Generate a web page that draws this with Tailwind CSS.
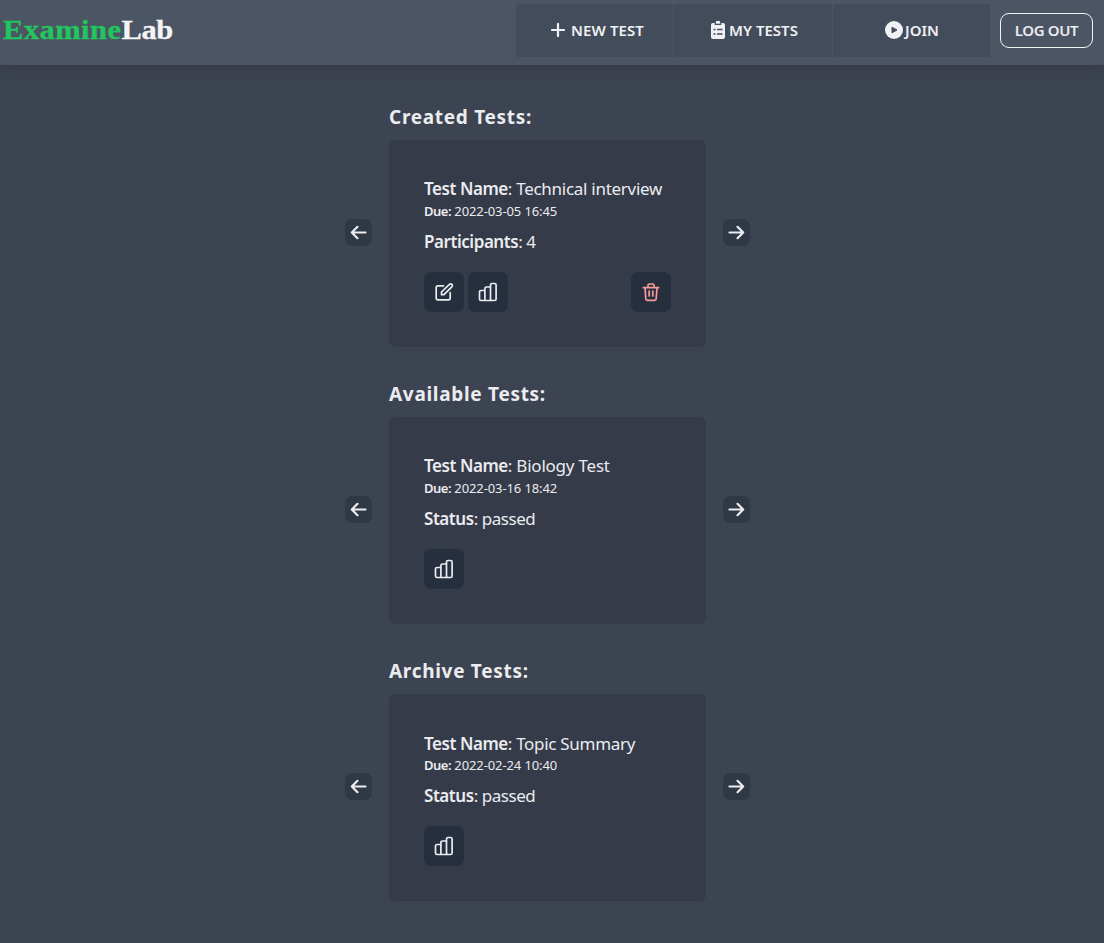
<!DOCTYPE html>
<html lang="en">
<head>
<meta charset="utf-8">
<title>ExamineLab</title>
<script src="https://cdn.jsdelivr.net/npm/@tailwindcss/browser@4"></script>
</head>
<body class="bg-[#3d4451] h-[943px] overflow-hidden font-['Noto_Sans','Open_Sans',sans-serif] text-[#ebecf0]">
<svg class="hidden">
  <symbol id="left" viewBox="0 0 20 20"><path d="M16.500 9.500H3.500M8.500 3.800L2.800 9.500l5.700 5.700" fill="none" stroke="currentColor" stroke-width="2.200" stroke-linecap="round" stroke-linejoin="round"/></symbol>
  <symbol id="right" viewBox="0 0 20 20"><path d="M2.500 9.500h13M10.500 3.800l5.700 5.700-5.700 5.700" fill="none" stroke="currentColor" stroke-width="2.200" stroke-linecap="round" stroke-linejoin="round"/></symbol>
  <symbol id="chart" viewBox="0 0 20 20"><path d="M1.500 10q0-1.500 1.500-1.500h3.900v10H3q-1.500 0-1.500-1.500zM6.900 18.500V6.500Q6.900 5 8.400 5h4.100v13.500zM12.500 17V3q0-1.500 1.500-1.500h2.600q1.500 0 1.500 1.500v14q0 1.500-1.500 1.500H14q-1.500 0-1.500-1.500z" fill="none" stroke="currentColor" stroke-width="1.700" stroke-linejoin="round"/></symbol>
  <symbol id="edit" viewBox="0 0 20 20"><path d="M9.500 3.800H4Q2.200 3.800 2.200 5.600V16q0 1.800 1.800 1.800h10.400q1.800 0 1.800-1.800v-5.500M7.500 12.700V10l7.900-7.700q1.300-1 2.400 0t0 2.500L10 12.700z" fill="none" stroke="currentColor" stroke-width="1.700" stroke-linecap="round" stroke-linejoin="round"/></symbol>
  <symbol id="trash" viewBox="0 0 20 20"><path d="M2.400 5.700h15.200M4 5.700l.8 11q.1 1.600 1.600 1.600h7.200q1.500 0 1.600-1.600l.8-11M7 5.500V3.500Q7 2 8.300 2h3.400Q13 2 13 3.500v2M8.200 9v5M11.800 9v5" fill="none" stroke="currentColor" stroke-width="1.700" stroke-linecap="round"/></symbol>
</svg>
<header class="flex h-[65px] bg-[#4b5563] shadow-[0_4px_12px_rgba(0,0,0,0.14)]">
  <div class="w-[516px] shrink-0 pl-[3px] pt-[12px]">
    <div class="inline-block origin-left scale-x-[1.130] whitespace-nowrap font-['Liberation_Serif',serif] text-[27px] leading-[36px] font-bold text-[#f3f4f6] [-webkit-text-stroke:0.300px]"><span class="text-[#22c55e] tracking-[0.400px]">Examine</span><span class="tracking-[-0.300px]">Lab</span></div>
  </div>
  <nav class="mt-1 flex h-[53px] w-[474px] gap-px text-[15px] font-semibold text-[#f0f1f4]">
    <a class="flex w-[157px] items-center justify-center gap-[6px] bg-[#434c5a] pl-[6px]">
      <svg class="mb-px size-[14px]" viewBox="0 0 14 14"><path d="M7 1v12M1 7h12" stroke="currentColor" stroke-width="2.200" stroke-linecap="round"/></svg>
      <span class="whitespace-nowrap tracking-[0.100px]">NEW TEST</span>
    </a>
    <a class="flex w-[158px] items-center justify-center gap-[4px] bg-[#434c5a] pl-[3px]">
      <svg class="mb-px h-[18px] w-[14px]" viewBox="0 0 14 18"><path d="M2 2h1.700v2h6.600V2H12q2 0 2 2v12q0 2-2 2H2q-2 0-2-2V4q0-2 2-2z" fill="currentColor"/><rect x="4.800" width="4.400" height="2.800" rx="1" fill="currentColor"/><path d="M2.500 8.500h2M6 8.500h5.500M2.500 13h2M6 13h5.500" stroke="#434c5a" stroke-width="1.500"/></svg>
      <span class="whitespace-nowrap tracking-[0px]">MY TESTS</span>
    </a>
    <a class="flex w-[157px] items-center justify-center gap-[2px] bg-[#434c5a] pb-px pl-px">
      <svg class="size-[18px]" viewBox="0 0 18 18"><circle cx="9" cy="9" r="9" fill="currentColor"/><path d="M7 6.200v5.600L12 9z" fill="#434c5a" stroke="#434c5a" stroke-linejoin="round"/></svg>
      <span class="whitespace-nowrap tracking-[0px]">JOIN</span>
    </a>
  </nav>
  <button class="mt-[13px] ml-[10px] flex h-[35px] w-[93px] items-center justify-center rounded-[9px] border border-[#f3f4f6] text-[15px] font-semibold whitespace-nowrap tracking-[-0.350px]">LOG OUT</button>
</header>
<main class="ml-[345px] w-[405px] pt-[37px]">
  <section class="h-[277px]">
    <h2 class="ml-[44px] h-[38px] text-[19px] leading-[30px] font-bold tracking-[0.700px] whitespace-nowrap"><span>Created Tests:</span></h2>
    <div class="flex items-start justify-between">
      <button class="mt-[79px] flex size-[27px] items-center justify-center rounded-[7px] bg-[#2f3845]"><svg class="size-[20px]"><use href="#left"/></svg></button>
      <article class="h-[207px] w-[317px] rounded-[6px] bg-[#353b48] p-[35px]">
        <p class="h-[28px] text-[17px] leading-[28px] whitespace-nowrap"><b class="font-semibold tracking-[-0.450px]">Test Name</b><span class="tracking-[-0.280px]">: Technical interview</span></p>
        <p class="h-[18px] text-[13px] leading-[16px] whitespace-nowrap tracking-[-0.100px]"><b class="font-semibold tracking-[-0.500px]">Due:</b> <span>2022-03-05 16:45</span></p>
        <p class="mt-[6px] h-[29px] text-[17px] leading-[29px] whitespace-nowrap"><b class="font-semibold tracking-[-0.450px]">Participants</b><span class="tracking-[-0.450px]">: 4</span></p>
        <div class="mt-[16px] flex gap-1">
          <button class="flex size-10 items-center justify-center rounded-[7px] bg-[#262f3d]"><svg class="size-[20px]"><use href="#edit"/></svg></button>
          <button class="flex size-10 items-center justify-center rounded-[7px] bg-[#262f3d]"><svg class="size-[20px]"><use href="#chart"/></svg></button>
          <button class="ml-auto flex size-10 items-center justify-center rounded-[7px] bg-[#262f3d] text-[#f99a9d]"><svg class="size-[20px]"><use href="#trash"/></svg></button>
        </div>
      </article>
      <button class="mt-[79px] flex size-[27px] items-center justify-center rounded-[7px] bg-[#2f3845]"><svg class="size-[20px]"><use href="#right"/></svg></button>
    </div>
  </section>
  <section class="h-[277px]">
    <h2 class="ml-[44px] h-[38px] text-[19px] leading-[30px] font-bold tracking-[0.700px] whitespace-nowrap"><span>Available Tests:</span></h2>
    <div class="flex items-start justify-between">
      <button class="mt-[79px] flex size-[27px] items-center justify-center rounded-[7px] bg-[#2f3845]"><svg class="size-[20px]"><use href="#left"/></svg></button>
      <article class="h-[207px] w-[317px] rounded-[6px] bg-[#353b48] p-[35px]">
        <p class="h-[28px] text-[17px] leading-[28px] whitespace-nowrap"><b class="font-semibold tracking-[-0.450px]">Test Name</b><span class="tracking-[-0.220px]">: Biology Test</span></p>
        <p class="h-[18px] text-[13px] leading-[16px] whitespace-nowrap tracking-[-0.100px]"><b class="font-semibold tracking-[-0.500px]">Due:</b> <span>2022-03-16 18:42</span></p>
        <p class="mt-[6px] h-[29px] text-[17px] leading-[29px] whitespace-nowrap"><b class="font-semibold tracking-[-0.450px]">Status</b><span class="tracking-[-0.450px]">: passed</span></p>
        <div class="mt-[16px] flex gap-1">
          <button class="flex size-10 items-center justify-center rounded-[7px] bg-[#262f3d]"><svg class="size-[20px]"><use href="#chart"/></svg></button>
        </div>
      </article>
      <button class="mt-[79px] flex size-[27px] items-center justify-center rounded-[7px] bg-[#2f3845]"><svg class="size-[20px]"><use href="#right"/></svg></button>
    </div>
  </section>
  <section class="h-[277px]">
    <h2 class="ml-[44px] h-[38px] text-[19px] leading-[30px] font-bold tracking-[0.700px] whitespace-nowrap"><span>Archive Tests:</span></h2>
    <div class="flex items-start justify-between">
      <button class="mt-[79px] flex size-[27px] items-center justify-center rounded-[7px] bg-[#2f3845]"><svg class="size-[20px]"><use href="#left"/></svg></button>
      <article class="h-[207px] w-[317px] rounded-[6px] bg-[#353b48] p-[35px]">
        <p class="h-[28px] text-[17px] leading-[30px] whitespace-nowrap"><b class="font-semibold tracking-[-0.450px]">Test Name</b><span class="tracking-[-0.300px]">: Topic Summary</span></p>
        <p class="h-[18px] text-[13px] leading-[16px] whitespace-nowrap tracking-[-0.100px]"><b class="font-semibold tracking-[-0.500px]">Due:</b> <span>2022-02-24 10:40</span></p>
        <p class="mt-[6px] h-[29px] text-[17px] leading-[29px] whitespace-nowrap"><b class="font-semibold tracking-[-0.450px]">Status</b><span class="tracking-[-0.450px]">: passed</span></p>
        <div class="mt-[16px] flex gap-1">
          <button class="flex size-10 items-center justify-center rounded-[7px] bg-[#262f3d]"><svg class="size-[20px]"><use href="#chart"/></svg></button>
        </div>
      </article>
      <button class="mt-[79px] flex size-[27px] items-center justify-center rounded-[7px] bg-[#2f3845]"><svg class="size-[20px]"><use href="#right"/></svg></button>
    </div>
  </section>
</main>
</body>
</html>
